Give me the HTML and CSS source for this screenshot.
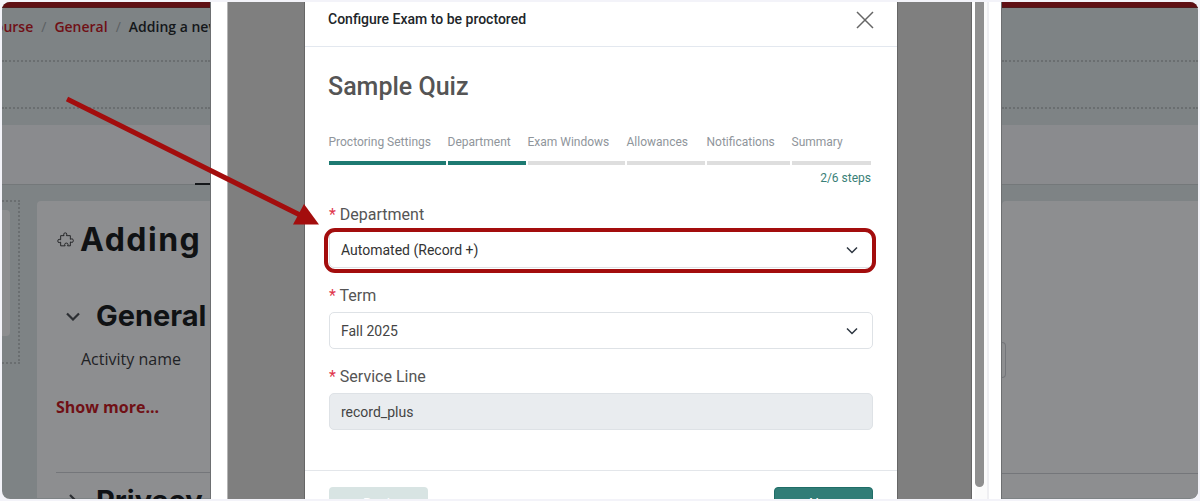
FILE: index.html
```html
<!DOCTYPE html>
<html lang="en">
<head>
  <meta charset="UTF-8">
  <title>Configure Exam to be proctored</title>
  <link rel="stylesheet" href="styles.css">
</head>
<body>
  <div class="shot">
    <div class="lms lms-left">
      <div class="lms-band"></div>
      <div class="crumbs">
        <a>Course</a><span class="sep">/</span><a>General</a><span class="sep">/</span><b>Adding a new Quiz</b>
      </div>
      <div class="dots dots-one"></div>
      <div class="dots dots-two"></div>
      <div class="tabs-strip"><span class="tab-mark"></span></div>
      <div class="lms-body">
        <div class="side-col"><div class="side-card"></div></div>
        <div class="main-card">
          <h1 class="page-title">
            <svg class="puzzle" viewBox="0.5 0.5 14 14" width="17" height="17"><path d="M6 2.2c0-1.3 2.6-1.3 2.6 0 0 .6-.3.9-.3 1.3h3.2v3c.5 0 .8-.4 1.4-.4 1.4 0 1.4 3 0 3-.6 0-.9-.4-1.4-.4v3.2H9.2c0-.5.4-.8.4-1.3 0-1.3-2.8-1.3-2.8 0 0 .5.4.8.4 1.3H3.5v-3c-.5 0-.8.4-1.3.4-1.4 0-1.4-2.800 0-2.800.5 0 .8.4 1.3.4V3.5h2.800c0-.5-.3-.8-.3-1.3z" fill="none" stroke="#16181a" stroke-width="0.7"/></svg>
            <span>Adding a new Quiz</span>
          </h1>
          <h2 class="sect"><svg class="fold" viewBox="0 0 14 9" width="14" height="9"><path d="M1 1.500l6 6 6-6" fill="none" stroke="#2c2f33" stroke-width="2.200"/></svg>General</h2>
          <div class="field-name">Activity name</div>
          <a class="show-more">Show more...</a>
          <h2 class="sect sect-closed"><svg class="fold" viewBox="0 0 9 14" width="10" height="14"><path d="M1.500 1l6 6-6 6" fill="none" stroke="#2c2f33" stroke-width="2.200"/></svg>Privacy</h2>
        </div>
      </div>
    </div>

    <div class="gutter"></div>

    <div class="backdrop backdrop-left"></div>
    <div class="modal">
      <div class="modal-head">
        <span class="modal-title">Configure Exam to be proctored</span>
        <svg class="close" viewBox="0 0 18 18" width="18" height="18"><path d="M1 1l16 16M17 1L1 17" stroke="#666" stroke-width="1.500" fill="none"/></svg>
      </div>
      <div class="modal-body">
        <h2 class="quiz-name">Sample Quiz</h2>
        <div class="steps">
          <div class="step done">Proctoring Settings</div>
          <div class="step done">Department</div>
          <div class="step">Exam Windows</div>
          <div class="step">Allowances</div>
          <div class="step">Notifications</div>
          <div class="step">Summary</div>
        </div>
        <div class="step-count">2/6 steps</div>

        <label class="lbl"><span class="req">*</span> Department</label>
        <div class="select select-hi">
          <span>Automated (Record +)</span>
          <svg class="chev" viewBox="0 0 12 8" width="12" height="8"><path d="M1 1.500l5 5 5-5" fill="none" stroke="#2d3640" stroke-width="1.500"/></svg>
        </div>

        <label class="lbl"><span class="req">*</span> Term</label>
        <div class="select">
          <span>Fall 2025</span>
          <svg class="chev" viewBox="0 0 12 8" width="12" height="8"><path d="M1 1.500l5 5 5-5" fill="none" stroke="#2d3640" stroke-width="1.500"/></svg>
        </div>

        <label class="lbl"><span class="req">*</span> Service Line</label>
        <div class="select select-off"><span>record_plus</span></div>
      </div>
      <div class="modal-foot">
        <button class="btn btn-back">Back</button>
        <button class="btn btn-next">Next</button>
      </div>
    </div>
    <div class="backdrop backdrop-right"></div>

    <div class="scroll-gap"></div>
    <div class="scroll-track"><div class="scroll-thumb"></div></div>
    <div class="scroll-line"></div>
    <div class="gutter gutter-right"></div>

    <div class="lms lms-right">
      <div class="lms-band"></div>
      <div class="crumbs"></div>
      <div class="dots dots-one"></div>
      <div class="dots dots-two"></div>
      <div class="tabs-strip"></div>
      <div class="right-body">
        <div class="right-card"></div>
        <div class="right-rule"></div>
      </div>
      <span class="right-tab"></span>
    </div>

    <!-- annotation drawn over the screenshot -->
    <svg class="arrow" viewBox="0 0 1196 497" width="1196" height="497">
      <path d="M65 97L300 214" stroke="#a30d0d" stroke-width="5" fill="none"/>
      <path d="M317 222.500L291 222.500L302 202z" fill="#a30d0d"/>
    </svg>
    <div class="highlight"></div>
  </div>
</body>
</html>
```

FILE: styles.css
```css
* {
  box-sizing: border-box;
}

body {
  margin: 0;
  background: #f3f3f9;
  font-family: 'Roboto', sans-serif;
}

.shot {
  position: relative;
  display: flex;
  width: 1196px;
  height: 497px;
  margin: 2px;
  overflow: hidden;
  border-radius: 8px;
  background: #fff;
}

/* dimmed page behind the modal */
.lms {
  position: relative;
  flex-shrink: 0;
  overflow: hidden;
  background: #7e8385;
  font-family: 'Open Sans', sans-serif;
}

.lms-left {
  width: 209px;
  border-right: 1px solid #6d6f71;
}

.lms-right {
  width: 197px;
  border-left: 1px solid #6d6f71;
}

.lms-band {
  height: 6px;
  background: #5f0f14;
  border-bottom: 1px solid #4e1a1d;
}

.crumbs {
  height: 38px;
  margin-left: -16px;
  padding-top: 9px;
  font-size: 14px;
  font-weight: 600;
  white-space: nowrap;
  color: #14171a;
}

.crumbs a {
  color: #701015;
}

.crumbs b {
  font-weight: 600;
}

.sep {
  margin: 0 8px;
  color: #5c6063;
  font-weight: 400;
}

.dots {
  border-top: 2px dotted #6a6e70;
}

.dots-one {
  margin-top: 14px;
}

.dots-two {
  margin-top: 45px;
}

.tabs-strip {
  position: relative;
  height: 60px;
  margin-top: 16px;
  background: #8a8b8e;
  border-bottom: 1px solid #74787a;
}

.tab-mark {
  position: absolute;
  left: 193px;
  bottom: -1px;
  width: 16px;
  height: 2px;
  background: #14171a;
}

.lms-body {
  display: flex;
  height: 313px;
  padding-top: 16px;
}

.side-col {
  flex-shrink: 0;
  width: 18px;
  height: 164px;
  margin-top: -1px;
  padding-top: 8px;
  border-top: 2px dotted #6a6e70;
  border-right: 2px dotted #6a6e70;
  border-bottom: 2px dotted #6a6e70;
}

.side-card {
  width: 8px;
  height: 126px;
  background: #8d8e90;
  border-radius: 0 4px 4px 0;
}

.main-card {
  flex: 1;
  min-width: 0;
  margin-left: 17px;
  padding: 19px 0 0 20px;
  background: #8d8e90;
  border-radius: 4px 0 0 0;
  white-space: nowrap;
}

.page-title {
  display: flex;
  align-items: center;
  gap: 6px;
  margin: 0;
  font-family: 'Inter', sans-serif;
  font-size: 32px;
  font-weight: 700;
  line-height: 40px;
  letter-spacing: 1.5px;
  word-spacing: 12px;
  color: #101214;
}

.puzzle {
  flex-shrink: 0;
}

.sect {
  display: flex;
  align-items: center;
  margin: 39px 0 0 9px;
  font-family: 'Inter', sans-serif;
  font-size: 29px;
  font-weight: 700;
  line-height: 34px;
  color: #101214;
}

.fold {
  flex-shrink: 0;
  margin-right: 16px;
}

.field-name {
  margin: 15px 0 0 24px;
  font-size: 16px;
  line-height: 22px;
  color: #1f2225;
}

.show-more {
  display: block;
  margin: 26px 0 0 -1px;
  font-size: 16px;
  font-weight: 700;
  line-height: 22px;
  color: #701015;
}

.sect-closed {
  margin: 54px 0 0 -1px;
  padding: 11px 0 0 12px;
  border-top: 1px solid #74767a;
}

.sect-closed .fold {
  margin-right: 18px;
}

.gutter {
  width: 16px;
  flex-shrink: 0;
  background: #fff;
}

.gutter-right {
  width: 12px;
}

/* modal */
.backdrop {
  flex-shrink: 0;
  background: #7f7f7f;
}

.backdrop-left {
  width: 78px;
  border-left: 1px solid #b5b5b5;
  border-right: 1px solid #666;
}

.backdrop-right {
  width: 75px;
  border-left: 1px solid #666;
  border-right: 1px solid #666;
}

.modal {
  display: flex;
  flex-direction: column;
  width: 592px;
  flex-shrink: 0;
  background: #fff;
}

.modal-head {
  display: flex;
  flex-shrink: 0;
  align-items: center;
  justify-content: space-between;
  height: 45px;
  padding: 0 23px 10px 23px;
  border-bottom: 1px solid #e3e8ef;
}

.modal-title {
  font-size: 14px;
  font-weight: 500;
  color: #212529;
}

.close {
  margin-top: 2px;
}

.modal-body {
  flex-shrink: 0;
  height: 424px;
  padding: 25px 24px 0 24px;
  border-bottom: 1px solid #e3e6ea;
}

.quiz-name {
  margin: 0 0 0 -1px;
  font-size: 25px;
  font-weight: 500;
  line-height: 30px;
  color: #555;
}

.steps {
  display: grid;
  grid-template-columns: 117px 78px 97px 78px 83px 79px;
  gap: 2px;
  margin-top: 29px;
  margin-right: 2px;
}

.step {
  height: 34px;
  padding-top: 1px;
  font-size: 12px;
  line-height: 20px;
  text-indent: -0.5px;
  white-space: nowrap;
  color: #8f959b;
  border-bottom: 4px solid #dedede;
}

.step.done {
  border-bottom-color: #1d7a72;
}

.step-count {
  margin-top: 4px;
  margin-right: 2px;
  margin-bottom: 15px;
  font-size: 12px;
  line-height: 18px;
  text-align: right;
  color: #3a7f78;
}

.lbl {
  display: block;
  font-size: 16px;
  line-height: 26px;
  color: #555;
}

.req {
  color: #e0364c;
}

.select {
  display: flex;
  align-items: center;
  justify-content: space-between;
  height: 37px;
  margin-top: 3px;
  margin-bottom: 15px;
  padding: 0 14px 0 11px;
  font-size: 14px;
  color: #444;
  background: #fff;
  border: 1px solid #dee2e6;
  border-radius: 5px;
}

.select .chev {
  flex-shrink: 0;
}

.select-off {
  background: #e9ecef;
}

.select-hi {
  color: #333;
}

.modal-foot {
  display: flex;
  flex-shrink: 0;
  justify-content: space-between;
  padding: 16px 24px 0 24px;
}

.btn {
  width: 99px;
  height: 34px;
  font-family: 'Roboto', sans-serif;
  font-size: 14px;
  color: #fff;
  border-radius: 4px;
  border: 1px solid transparent;
}

.btn-back {
  background: #d8e4e3;
}

.btn-next {
  background: #317d77;
  border-color: #1f6d67;
}

/* scrollbar of the modal frame */
.scroll-gap {
  width: 3px;
  flex-shrink: 0;
  background: #fff;
}

.scroll-track {
  width: 12px;
  flex-shrink: 0;
  background: #fbfbfb;
}

.scroll-thumb {
  width: 9px;
  height: 485px;
  background: #8f8f8f;
  border-radius: 0 0 5px 5px;
}

.scroll-line {
  width: 2px;
  flex-shrink: 0;
  background: #efeff2;
}

.right-body {
  height: 313px;
  padding-top: 16px;
}

.right-card {
  height: 272px;
  background: #8d8e90;
  border-radius: 4px 0 0 0;
}

.right-rule {
  height: 25px;
  background: #8d8e90;
  border-top: 1px solid #74767a;
}

.right-tab {
  position: absolute;
  left: 0;
  top: 340px;
  width: 4px;
  height: 36px;
  border: 1px solid #74767a;
  border-left: 0;
  border-radius: 0 4px 4px 0;
}

/* annotation */
.arrow {
  position: absolute;
  left: 0;
  top: 0;
  pointer-events: none;
}

.highlight {
  position: absolute;
  left: 322px;
  top: 226px;
  width: 552px;
  height: 45px;
  border: 4px solid #a30d0d;
  border-radius: 11px;
}
```
